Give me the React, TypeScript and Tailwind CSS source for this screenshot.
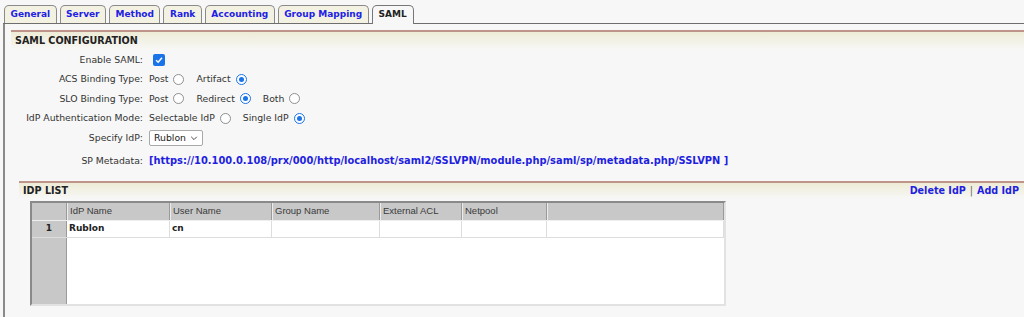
import React from "react";

const tabs = ["General", "Server", "Method", "Rank", "Accounting", "Group Mapping", "SAML"];

const columns = [
  { name: "IdP Name", w: "w-[103px]" },
  { name: "User Name", w: "w-[102px]" },
  { name: "Group Name", w: "w-[108px]" },
  { name: "External ACL", w: "w-[82px]" },
  { name: "Netpool", w: "w-[85px]" },
  { name: "", w: "flex-1" },
];

const Radio = ({ checked }: { checked?: boolean }) =>
  checked ? (
    <span className="ml-[5px] inline-flex h-[11px] w-[11px] items-center justify-center rounded-full border-[1.5px] border-[#1a73e8] bg-white">
      <span className="h-[5px] w-[5px] rounded-full bg-[#1a73e8]" />
    </span>
  ) : (
    <span className="ml-[5px] inline-block h-[11px] w-[11px] rounded-full border border-[#8f8f8f] bg-white" />
  );

const Option = ({ label, checked }: { label: string; checked?: boolean }) => (
  <span className="mr-[12px] flex items-center">
    {label}
    <Radio checked={checked} />
  </span>
);

const Row = ({ label, children, h = "h-[19.5px]" }: { label: string; children: React.ReactNode; h?: string }) => (
  <div className={`flex items-center ${h}`}>
    <div className="w-[133px] pr-[1px] text-right">{label}</div>
    <div className="ml-[5px] flex items-center">{children}</div>
  </div>
);

export default function App() {
  return (
    <div className="h-[317px] w-full overflow-hidden bg-[#f7f7f7] pl-[3px] font-['DejaVu_Sans',Verdana,sans-serif] text-[9.3px] text-[#333]">
      <div className="flex h-[24px] gap-[3px] border-b border-[#6e6e6e] pl-[1px] pt-[5px] text-[9px]">
        {tabs.map((t) =>
          t === "SAML" ? (
            <div
              key={t}
              className="relative z-10 mb-[-1px] flex h-[19px] items-center rounded-t-[5px] border border-b-0 border-[#777] bg-[#f7f7f7] px-[6px] font-bold text-[#222]"
            >
              {t}
            </div>
          ) : (
            <div
              key={t}
              className="flex h-[18px] items-center rounded-t-[5px] border border-b-0 border-[#8a8a8a] bg-[#f3f1e1] px-[5.5px] font-bold text-[#2121e6]"
            >
              {t}
            </div>
          )
        )}
      </div>

      <div className="h-full border-l-2 border-[#8a8a8a] pl-[6px] pt-[6px]">
        <div className="h-[2px] bg-[#bf958b]" />
        <div className="flex h-[18px] items-center bg-linear-to-b from-[#eeecd6] to-[#f7f7f7] pl-[4px] text-[9.6px] font-bold text-[#222]">
          SAML CONFIGURATION
        </div>

        <Row label="Enable SAML:">
          <span className="ml-[4px] flex h-[12px] w-[12px] items-center justify-center rounded-[2px] bg-[#1a73e8]">
            <svg viewBox="0 0 12 12" className="h-[10px] w-[10px]">
              <path d="M2.5 6.2 L5 8.6 L9.6 3.4" fill="none" stroke="white" strokeWidth="1.8" />
            </svg>
          </span>
        </Row>
        <Row label="ACS Binding Type:">
          <Option label="Post" />
          <Option label="Artifact" checked />
        </Row>
        <Row label="SLO Binding Type:">
          <Option label="Post" />
          <Option label="Redirect" checked />
          <Option label="Both" />
        </Row>
        <Row label="IdP Authentication Mode:">
          <Option label="Selectable IdP" />
          <Option label="Single IdP" checked />
        </Row>
        <Row label="Specify IdP:" h="h-[20px]">
          <span className="flex h-[16px] w-[54px] items-center justify-between rounded-[2px] border border-[#a9a9a9] bg-white pl-[4px] pr-[4px] text-[#222]">
            Rublon
            <svg viewBox="0 0 10 10" className="h-[8px] w-[8px]">
              <path d="M1.5 3.5 L5 7 L8.5 3.5" fill="none" stroke="#333" strokeWidth="1.1" />
            </svg>
          </span>
        </Row>
        <div className="mt-[3px]">
          <Row label="SP Metadata:" h="h-[20px]">
            <span className="text-[9.9px] font-bold text-[#1f1fe0]">
              [https://10.100.0.108/prx/000/http/localhost/saml2/SSLVPN/module.php/saml/sp/metadata.php/SSLVPN ]
            </span>
          </Row>
        </div>

        <div className="ml-[8px] mt-[10px]">
          <div className="h-[2px] bg-[#bf958b]" />
          <div className="flex h-[16px] items-center justify-between bg-linear-to-b from-[#eeecd6] to-[#f7f7f7] pl-[4px] pr-[5px] text-[9.6px] font-bold">
            <span className="text-[#222]">IDP LIST</span>
            <span className="flex items-center gap-[4px] text-[#1f1fe0]">
              Delete IdP <span className="font-normal text-[#666]">|</span> Add IdP
            </span>
          </div>

          <div className="ml-[11px] mt-[2px] w-[696px] border-2 border-b-[#e2e2e2] border-l-[#8a8a8a] border-r-[#e2e2e2] border-t-[#8a8a8a] font-['Liberation_Sans',Tahoma,sans-serif] text-[9.5px]">
            <div className="flex h-[18px] border-b border-[#eeeeee] bg-[#c8c8c8]">
              <div className="w-[35px] border-r border-[#9a9a9a]" />
              {columns.map((c, i) => (
                <div
                  key={i}
                  className={`${c.w} flex items-center border-r border-[#9a9a9a] pl-[3px] text-[#3a3a3a] shadow-[inset_1px_0_0_#ececec]`}
                >
                  {c.name}
                </div>
              ))}
            </div>
            <div className="flex h-[17px] border-b border-[#dddddd] font-['DejaVu_Sans',Verdana,sans-serif] text-[9px] font-bold text-[#222]">
              <div className="flex w-[35px] items-center justify-center border-r border-[#9a9a9a] bg-[#c8c8c8]">1</div>
              {columns.map((c, i) => (
                <div key={i} className={`${c.w} flex items-center border-r border-[#dddddd] bg-white pl-[2px]`}>
                  {i === 0 ? "Rublon" : i === 1 ? "cn" : ""}
                </div>
              ))}
            </div>
            <div className="flex h-[66px]">
              <div className="w-[35px] border-r border-[#9a9a9a] bg-[#c8c8c8]" />
              <div className="flex-1 bg-white" />
            </div>
          </div>
        </div>
      </div>
    </div>
  );
}
